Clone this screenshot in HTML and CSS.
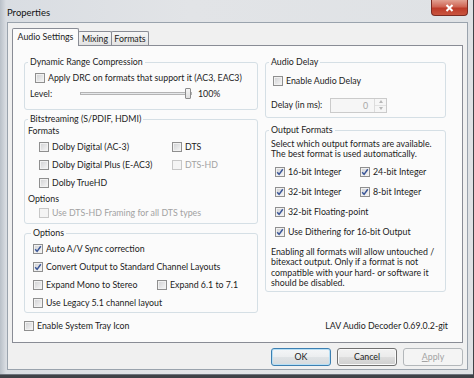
FILE: index.html
```html
<!DOCTYPE html>
<html>
<head>
<meta charset="utf-8">
<title>Properties</title>
<link rel="stylesheet" href="styles.css">
</head>
<body>
<div class="window">
  <div class="titlebar">
    <span class="title">Properties</span>
    <div class="close"><svg width="9" height="8" viewBox="0 0 9 8"><path d="M1.5 1 L7.5 7 M7.5 1 L1.5 7" stroke="#fff" stroke-width="2"/></svg></div>
  </div>
  <div class="client">
    <div class="tabs">
      <div class="tab active">Audio Settings</div>
      <div class="tab t-mixing">Mixing</div>
      <div class="tab t-formats">Formats</div>
    </div>
    <div class="panel">
      <div class="cols">
        <div class="col col-left">
          <fieldset class="group g-drc">
            <legend>Dynamic Range Compression</legend>
            <div class="cb-row r-drc"><span class="cb"></span><span>Apply DRC on formats that support it (AC3, EAC3)</span></div>
            <div class="level-row">
              <span class="level-label">Level:</span>
              <div class="slider"><span class="track"></span><span class="thumb"></span></div>
              <span class="level-val">100%</span>
            </div>
          </fieldset>

          <fieldset class="group g-bit">
            <legend>Bitstreaming (S/PDIF, HDMI)</legend>
            <div class="sub-label">Formats</div>
            <div class="fmt-grid">
              <div class="cb-row"><span class="cb"></span><span>Dolby Digital (AC-3)</span></div>
              <div class="cb-row"><span class="cb"></span><span>DTS</span></div>
              <div class="cb-row"><span class="cb"></span><span>Dolby Digital Plus (E-AC3)</span></div>
              <div class="cb-row dis"><span class="cb"></span><span>DTS-HD</span></div>
              <div class="cb-row"><span class="cb"></span><span>Dolby TrueHD</span></div>
            </div>
            <div class="sub-label">Options</div>
            <div class="cb-row dis r16 ind"><span class="cb"></span><span>Use DTS-HD Framing for all DTS types</span></div>
          </fieldset>

          <fieldset class="group g-opt">
            <legend>Options</legend>
            <div class="cb-row"><span class="cb"><svg class="tick" width="8" height="8" viewBox="0 0 8 8"><path d="M1.2 4.2 L3.1 6.4 L6.8 1.2" fill="none" stroke="#3a5698" stroke-width="1.5"/></svg></span><span>Auto A/V Sync correction</span></div>
            <div class="cb-row"><span class="cb"><svg class="tick" width="8" height="8" viewBox="0 0 8 8"><path d="M1.2 4.2 L3.1 6.4 L6.8 1.2" fill="none" stroke="#3a5698" stroke-width="1.5"/></svg></span><span>Convert Output to Standard Channel Layouts</span></div>
            <div class="opt-grid">
              <div class="cb-row"><span class="cb"></span><span>Expand Mono to Stereo</span></div>
              <div class="cb-row"><span class="cb"></span><span>Expand 6.1 to 7.1</span></div>
            </div>
            <div class="cb-row"><span class="cb"></span><span>Use Legacy 5.1 channel layout</span></div>
          </fieldset>
        </div>

        <div class="col col-right">
          <fieldset class="group g-delay">
            <legend>Audio Delay</legend>
            <div class="cb-row r16 r-delay"><span class="cb"></span><span>Enable Audio Delay</span></div>
            <div class="delay-row">
              <span class="delay-label">Delay (in ms):</span>
              <div class="spin">
                <span class="spin-val">0</span>
                <span class="spin-btns"><span class="spin-up"></span><span class="spin-down"></span></span>
              </div>
            </div>
          </fieldset>

          <fieldset class="group g-out">
            <legend>Output Formats</legend>
            <p class="desc">Select which output formats are available.<br>The best format is used automatically.</p>
            <div class="out-grid">
              <div class="cb-row"><span class="cb"><svg class="tick" width="8" height="8" viewBox="0 0 8 8"><path d="M1.2 4.2 L3.1 6.4 L6.8 1.2" fill="none" stroke="#3a5698" stroke-width="1.5"/></svg></span><span>16-bit Integer</span></div>
              <div class="cb-row"><span class="cb"><svg class="tick" width="8" height="8" viewBox="0 0 8 8"><path d="M1.2 4.2 L3.1 6.4 L6.8 1.2" fill="none" stroke="#3a5698" stroke-width="1.5"/></svg></span><span>24-bit Integer</span></div>
              <div class="cb-row"><span class="cb"><svg class="tick" width="8" height="8" viewBox="0 0 8 8"><path d="M1.2 4.2 L3.1 6.4 L6.8 1.2" fill="none" stroke="#3a5698" stroke-width="1.5"/></svg></span><span>32-bit Integer</span></div>
              <div class="cb-row"><span class="cb"><svg class="tick" width="8" height="8" viewBox="0 0 8 8"><path d="M1.2 4.2 L3.1 6.4 L6.8 1.2" fill="none" stroke="#3a5698" stroke-width="1.5"/></svg></span><span>8-bit Integer</span></div>
              <div class="cb-row span2"><span class="cb"><svg class="tick" width="8" height="8" viewBox="0 0 8 8"><path d="M1.2 4.2 L3.1 6.4 L6.8 1.2" fill="none" stroke="#3a5698" stroke-width="1.5"/></svg></span><span>32-bit Floating-point</span></div>
              <div class="cb-row span2"><span class="cb"><svg class="tick" width="8" height="8" viewBox="0 0 8 8"><path d="M1.2 4.2 L3.1 6.4 L6.8 1.2" fill="none" stroke="#3a5698" stroke-width="1.5"/></svg></span><span>Use Dithering for 16-bit Output</span></div>
            </div>
            <p class="note">Enabling all formats will allow untouched /<br>bitexact output. Only if a format is not<br>compatible with your hard- or software it<br>should be disabled.</p>
          </fieldset>
        </div>
      </div>
      <div class="footer">
        <div class="cb-row r16"><span class="cb"></span><span>Enable System Tray Icon</span></div>
        <span class="version">LAV Audio Decoder 0.69.0.2-git</span>
      </div>
    </div>
    <div class="buttons">
      <div class="btn default">OK</div>
      <div class="btn">Cancel</div>
      <div class="btn dis"><u>A</u>pply</div>
    </div>
  </div>
</div>
</body>
</html>
```

FILE: styles.css
```css
* { box-sizing: border-box; }

html, body {
  margin: 0;
  padding: 0;
}

body {
  width: 474px;
  height: 378px;
  overflow: hidden;
  background: #3f4247;
  font-family: Lato, "Liberation Sans", sans-serif;
  font-size: 8.8px;
  line-height: 12px;
  color: #1c1c1c;
}

.window {
  width: 473px;
  height: 375px;
  display: flex;
  flex-direction: column;
  padding: 0 5px 4px 7px;
  background: linear-gradient(90deg, #b9c0c8 0px, #d9dde2 6px, #e2e4e7 40%, #dfe2e5 100%);
  border-bottom: 1px solid #6d747c;
}

.titlebar {
  height: 22px;
  display: flex;
  align-items: flex-start;
  flex-shrink: 0;
}

.title {
  margin-top: 7px;
  font-size: 9.5px;
  line-height: 12px;
  color: #111;
}

.close {
  margin-left: auto;
  width: 37px;
  height: 16px;
  border: 1px solid #7b2b22;
  border-top: none;
  border-radius: 0 0 4px 4px;
  background: linear-gradient(#e2a192 0%, #cf6554 45%, #bd3b29 55%, #c9553f 100%);
  display: flex;
  align-items: center;
  justify-content: center;
}

.client {
  width: 461px;
  height: 349px;
  border: 1px solid #9aa3ad;
  background: #f0f0f0;
  padding: 5px 0 0 4px;
  display: flex;
  flex-direction: column;
}

/* Tabs */
.tabs {
  display: flex;
  align-items: flex-end;
  height: 17px;
  flex-shrink: 0;
}

.tab {
  height: 14px;
  border: 1px solid #898c95;
  border-bottom: none;
  border-radius: 2px 2px 0 0;
  background: linear-gradient(#f6f6f6, #e3e3e3);
  text-align: center;
  line-height: 13px;
  margin-left: -1px;
}

.tab.active {
  height: 18px;
  margin-bottom: -1px;
  margin-left: 0;
  width: 67px;
  background: #fbfbfb;
  position: relative;
  z-index: 1;
  line-height: 16px;
}

.t-mixing { width: 34px; }
.t-formats { width: 38px; }

/* Panel */
.panel {
  width: 451px;
  height: 298px;
  border: 1px solid #898c95;
  background: #fbfbfb;
  padding: 10px 0 0 11px;
  flex-shrink: 0;
}

.cols {
  display: flex;
  align-items: flex-start;
  gap: 7px;
}

.col-left { width: 234px; }
.col-right { width: 181px; }

.group {
  margin: 0;
  border: 1px solid #d5dfe5;
  border-radius: 3px;
  padding: 0 4px 0 5px;
  min-width: 0;
}

.group legend {
  padding: 0 2px;
  margin-left: -2px;
  line-height: 12px;
}

/* Checkboxes */
.cb-row {
  display: flex;
  align-items: center;
  height: 18px;
  white-space: nowrap;
}

.cb-row.r16 { height: 16px; }

.cb {
  width: 10px;
  height: 10px;
  flex-shrink: 0;
  margin-right: 3px;
  border: 1px solid #8f8f8f;
  background: linear-gradient(135deg, #cfd0d2, #f7f7f7);
  box-shadow: inset 0 0 0 1px #f1f1f1;
  display: flex;
  align-items: center;
  justify-content: center;
}

.tick { display: block; }

.cb-row.dis { color: #a2a2a2; }
.cb-row.dis .cb {
  border-color: #c7c7c7;
  background: #f4f4f4;
  box-shadow: none;
}

/* DRC */
.g-drc { padding-top: 2px; padding-bottom: 8px; }
.r-drc { height: 16px; margin-left: 5px; }

.level-row {
  display: flex;
  align-items: center;
  height: 15px;
}

.level-label { width: 50px; }

.slider {
  width: 112px;
  height: 11px;
  position: relative;
  display: flex;
  align-items: center;
}

.track {
  display: block;
  width: 100%;
  height: 3px;
  border: 1px solid #b4b4b4;
  background: #e6e8ea;
}

.thumb {
  position: absolute;
  left: 105px;
  top: 0;
  width: 6px;
  height: 11px;
  border: 1px solid #8c8c8c;
  border-radius: 1px;
  background: linear-gradient(#f6f6f6, #dedede);
}

.level-val { margin-left: 6px; }

/* Bitstreaming */
.g-bit { margin-top: 3px; padding-bottom: 2px; }

.sub-label {
  line-height: 12px;
  margin-left: -2px;
}

.fmt-grid {
  display: grid;
  grid-template-columns: 133px auto;
  margin: 1px 0 1px 9px;
}

.ind { margin-left: 9px; }

/* Options */
.g-opt { margin-top: 3px; padding-top: 1px; padding-left: 8px; }

.opt-grid {
  display: grid;
  grid-template-columns: 124px auto;
}

/* Audio delay */
.g-delay { padding-top: 5px; padding-bottom: 3px; }
.r-delay { margin-left: 2px; }

.delay-row {
  display: flex;
  align-items: center;
  height: 18px;
  margin-top: 7px;
}

.delay-label { width: 59px; }

.spin {
  width: 57px;
  height: 15px;
  border: 1px solid #cbcbcb;
  background: #f6f6f6;
  display: flex;
}

.spin-val {
  flex: 1;
  text-align: right;
  padding-right: 6px;
  line-height: 13px;
  color: #a7a7a7;
}

.spin-btns {
  width: 12px;
  display: flex;
  flex-direction: column;
  border-left: 1px solid #dcdcdc;
}

.spin-up, .spin-down {
  flex: 1;
  display: flex;
  align-items: center;
  justify-content: center;
}

.spin-up { border-bottom: 1px solid #e2e2e2; }

.spin-up::before {
  content: "";
  border-left: 2.5px solid transparent;
  border-right: 2.5px solid transparent;
  border-bottom: 3px solid #b7b7b7;
}

.spin-down::before {
  content: "";
  border-left: 2.5px solid transparent;
  border-right: 2.5px solid transparent;
  border-top: 3px solid #b7b7b7;
}

/* Output formats */
.g-out { margin-top: 6px; padding-top: 3px; padding-bottom: 3px; }

.desc, .note {
  margin: 0;
  line-height: 10.4px;
}

.out-grid {
  display: grid;
  grid-template-columns: 85px auto;
  grid-auto-rows: 20px;
  margin: 3px 0 4px 4px;
}

.span2 { grid-column: span 2; }

/* Footer */
.footer {
  width: 424px;
  margin-top: 5px;
  display: flex;
  align-items: center;
  justify-content: space-between;
}

/* Buttons */
.buttons {
  display: flex;
  justify-content: flex-end;
  gap: 6px;
  width: 451px;
  margin-top: 5px;
}

.btn {
  width: 60px;
  height: 18px;
  border: 1px solid #707070;
  border-radius: 3px;
  background: linear-gradient(#f2f2f2 0%, #ebebeb 48%, #dddddd 52%, #cfcfcf 100%);
  text-align: center;
  line-height: 16px;
  box-shadow: inset 0 0 0 1px #fafafa;
}

.btn.default {
  border-color: #3c7fb1;
  box-shadow: inset 0 0 0 1px #b7dff5;
  background: linear-gradient(#f4f6f8 0%, #eceef0 48%, #dfe3e6 52%, #d6dadd 100%);
}

.btn.dis {
  border-color: #b3b7ba;
  background: #f4f4f4;
  box-shadow: none;
  color: #a3a3a3;
}

.btn u { text-decoration: underline; }
```
